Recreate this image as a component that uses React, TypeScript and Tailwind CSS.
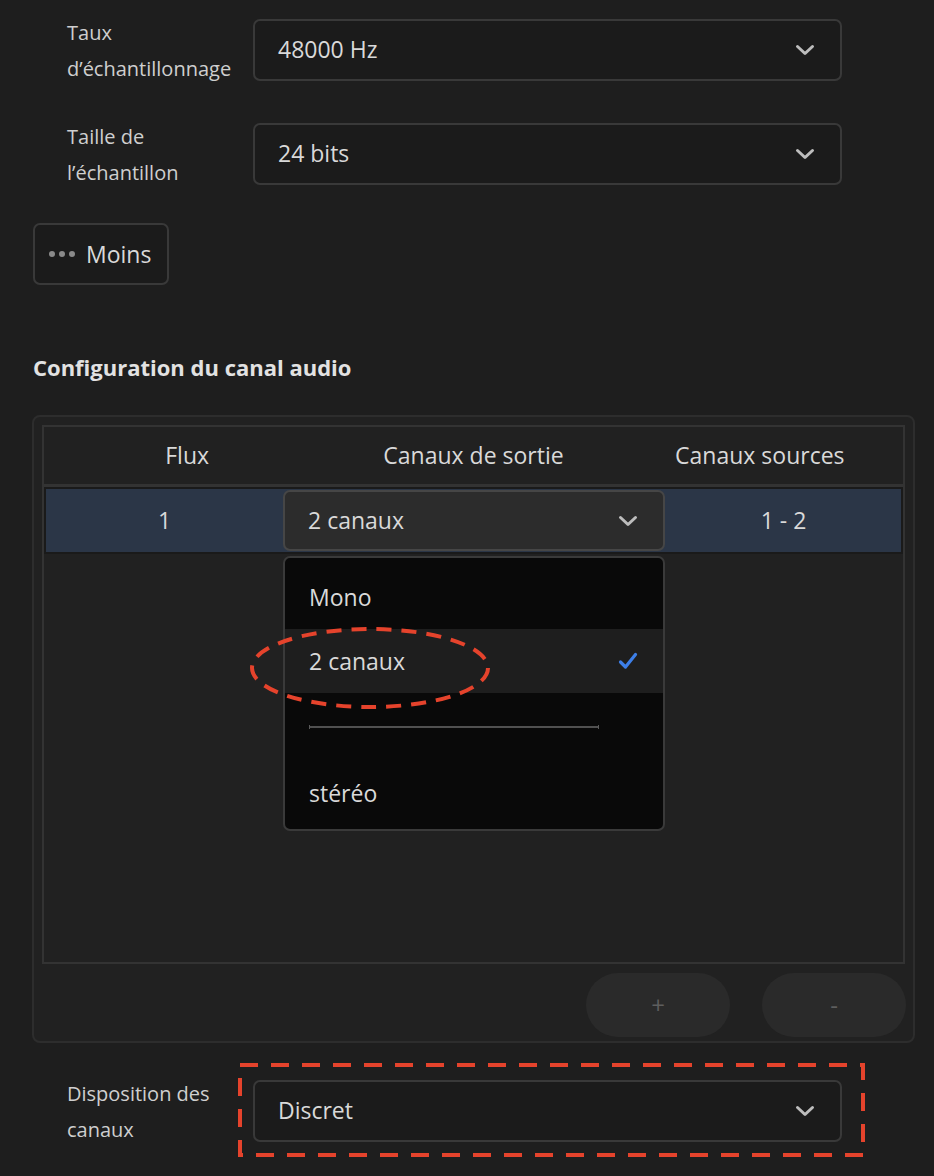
import React from "react";

function Chevron({ className = "" }: { className?: string }) {
  return (
    <svg className={className} width="20" height="12" viewBox="0 0 20 12" fill="none">
      <path d="M2.5 2.5 L10 9.5 L17.5 2.5" stroke="currentColor" strokeWidth="3" strokeLinecap="round" strokeLinejoin="round" />
    </svg>
  );
}

function Select({ value, className = "" }: { value: string; className?: string }) {
  return (
    <div
      className={`flex h-[62px] w-[589px] items-center justify-between rounded-[7px] border-2 border-[#393939] bg-[#1b1b1b] pl-[23px] pr-[25px] text-[23px] text-[#d9d9d9] ${className}`}
    >
      <span>{value}</span>
      <Chevron className="text-[#bdbdbd]" />
    </div>
  );
}

function FieldRow({ label, value, className = "" }: { label: React.ReactNode; value: string; className?: string }) {
  return (
    <div className={`flex items-center pl-[35px] ${className}`}>
      <div className="w-[186px] pt-[3px] text-[20px] leading-[36px] text-[#cfcfcf]">{label}</div>
      <Select value={value} />
    </div>
  );
}

export default function App() {
  return (
    <div className="min-h-screen bg-[#1e1e1e] px-[32px] pt-[12px] font-['Open_Sans',sans-serif] text-[#d9d9d9]">
      <FieldRow
        label={
          <>
            Taux
            <br />
            d’échantillonnage
          </>
        }
        value="48000 Hz"
      />
      <FieldRow
        className="mt-[29px]"
        label={
          <>
            Taille de
            <br />
            l’échantillon
          </>
        }
        value="24 bits"
      />

      <button className="mt-[32px] ml-[1px] flex h-[62px] w-[136px] items-center gap-[11px] rounded-[7px] border-2 border-[#393939] bg-[#1b1b1b] pl-[14px] text-[23px] text-[#d9d9d9]">
        <span className="flex gap-[4px]">
          <span className="h-[6px] w-[6px] rounded-full bg-[#8a8a8a]" />
          <span className="h-[6px] w-[6px] rounded-full bg-[#8a8a8a]" />
          <span className="h-[6px] w-[6px] rounded-full bg-[#8a8a8a]" />
        </span>
        Moins
      </button>

      <h2 className="mt-[67px] ml-[1px] text-[22px] font-bold leading-[30px] text-[#e2e2e2]">
        Configuration du canal audio
      </h2>

      {/* audio channel panel */}
      <div className="mt-[33px] h-[628px] w-[883px] rounded-[8px] border-2 border-[#2d2d2d] bg-[#212121] p-[8px]">
        <div className="h-[539px] border-2 border-[#333333]">
          <div className="grid h-[57px] grid-cols-3 items-center text-center text-[23px] text-[#d9d9d9]">
            <div>Flux</div>
            <div>Canaux de sortie</div>
            <div>Canaux sources</div>
          </div>
          <div className="h-[3px] bg-[#333333]" />
          <div className="border-2 border-[#1a1a1a] bg-[#2b3647]">
            <div className="grid h-[63px] grid-cols-[237px_382px_237px] items-center text-center text-[23px] text-[#d9d9d9]">
              <div>1</div>
              <div className="relative h-[61px]">
                <div className="flex h-full items-center justify-between rounded-[7px] border-2 border-[#464646] bg-[#2c2c2c] pl-[23px] pr-[25px]">
                  <span>2 canaux</span>
                  <Chevron className="text-[#bdbdbd]" />
                </div>

                {/* open menu */}
                <div className="absolute left-0 top-full z-10 mt-[5px] h-[275px] w-full rounded-[7px] border-2 border-[#3a3a3a] bg-[#090909] pt-[7px] text-left">
                  <div className="flex h-[64px] items-center pl-[24px]">Mono</div>
                  <div className="flex h-[64px] items-center justify-between bg-[#1e1e1e] pl-[24px] pr-[25px]">
                    <span>2 canaux</span>
                    <svg width="20" height="18" viewBox="0 0 20 18" fill="none">
                      <path d="M2.5 10 L7.5 15 L17.5 2.5" stroke="#3d7fe8" strokeWidth="3.2" strokeLinecap="round" strokeLinejoin="round" />
                    </svg>
                  </div>
                  <div className="flex h-[68px] items-center pl-[24px] pr-[64px]">
                    <div className="flex h-[4px] w-full items-center justify-between border-x border-[#5a5a5a]">
                      <div className="h-[2px] w-full bg-[#505050]" />
                    </div>
                  </div>
                  <div className="flex h-[64px] items-center pl-[24px]">stéréo</div>

                  {/* annotation ellipse */}
                  <svg className="pointer-events-none absolute left-[-37px] top-[67px]" width="244" height="86" viewBox="0 0 244 86" fill="none">
                    <ellipse cx="122" cy="43" rx="118" ry="39" stroke="#e5432c" strokeWidth="4" strokeDasharray="15 10" />
                  </svg>
                </div>
              </div>
              <div>1 - 2</div>
            </div>
          </div>
        </div>

        <div className="mt-[9px] flex justify-end gap-[32px]">
          <button className="h-[64px] w-[144px] rounded-full bg-[#2a2a2a] text-[24px] text-[#5e5e5e]">+</button>
          <button className="mr-[-1px] h-[64px] w-[144px] rounded-full bg-[#2a2a2a] text-[24px] text-[#5e5e5e]">-</button>
        </div>
      </div>

      <div className="relative mt-[30px]">
        <FieldRow
          label={
            <>
              Disposition des
              <br />
              canaux
            </>
          }
          value="Discret"
        />
        {/* annotation rectangle */}
        <svg className="pointer-events-none absolute left-[206px] top-[-10px]" width="627" height="94" viewBox="0 0 627 94" fill="none">
          <rect x="2" y="2" width="623" height="90" stroke="#e5432c" strokeWidth="4" strokeDasharray="18 13" />
        </svg>
      </div>
    </div>
  );
}
